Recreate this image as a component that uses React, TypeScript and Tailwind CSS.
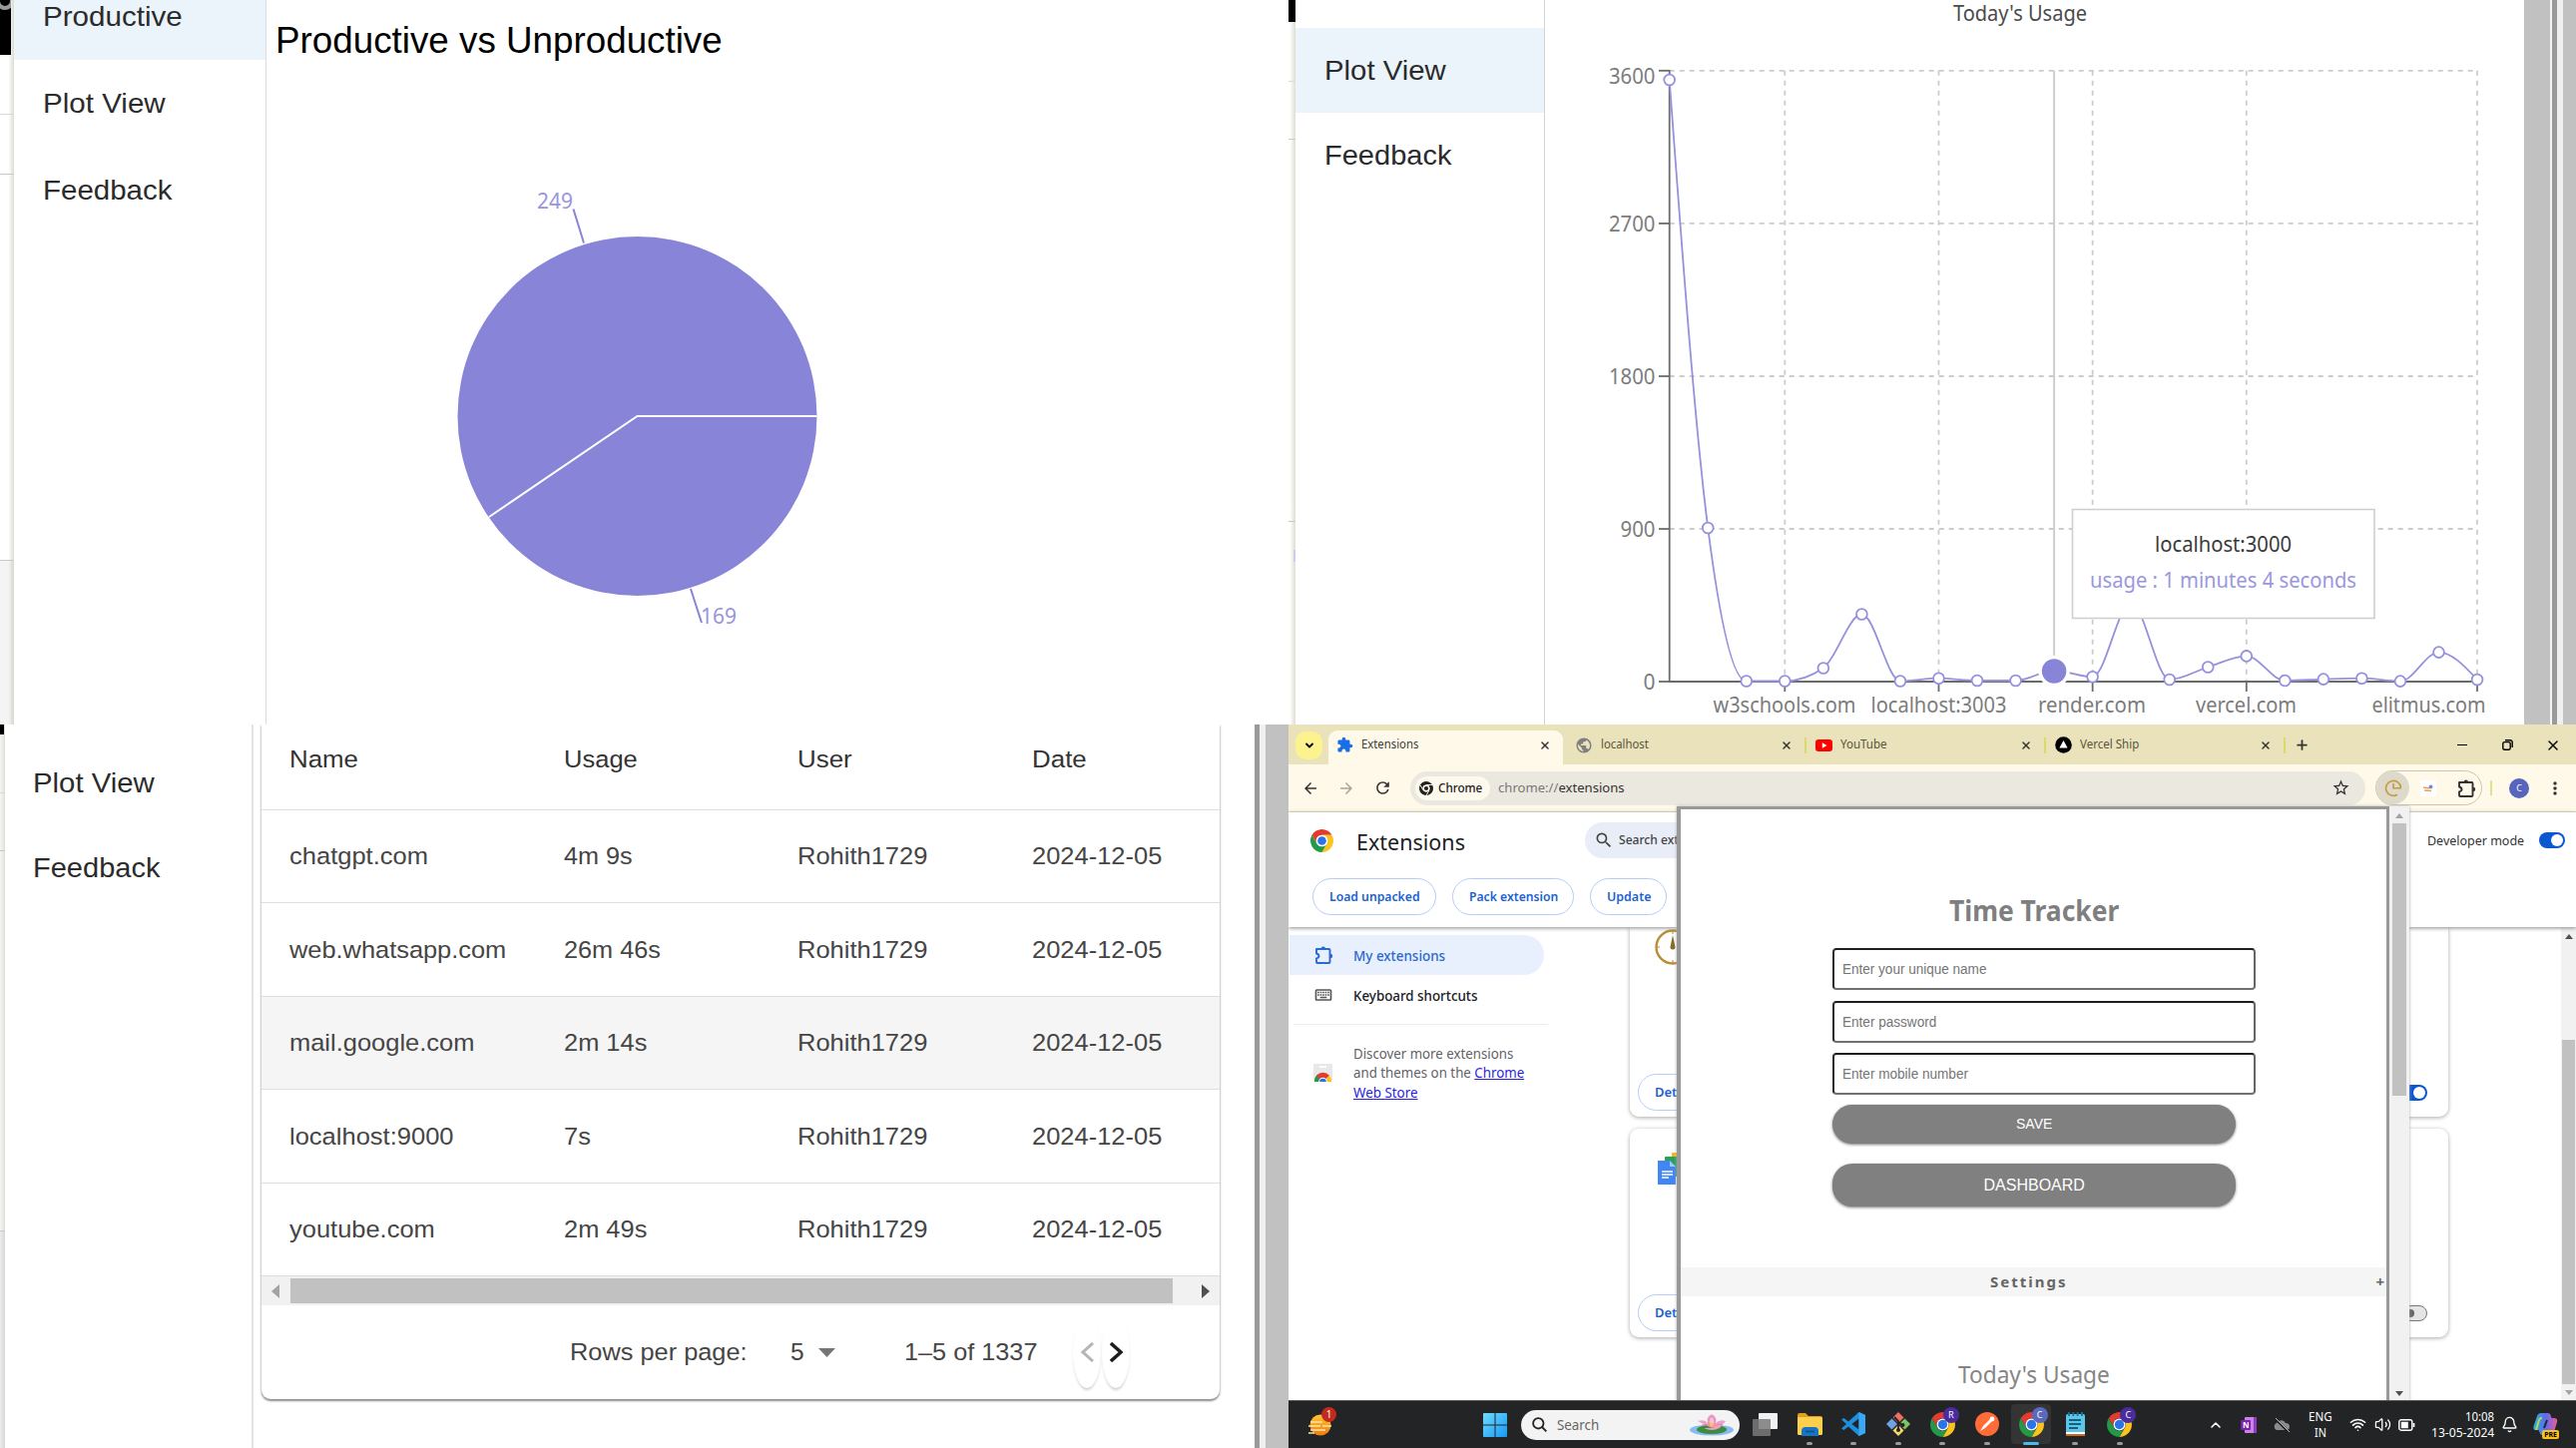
import { useLayoutEffect, useRef, useState } from "react";
import type { ReactNode } from "react";
import {
  MdExtension,
  MdOutlineExtension,
  MdPublic,
  MdOutlineKeyboard,
  MdRefresh,
  MdArrowBack,
  MdArrowForward,
  MdStarOutline,
  MdMoreVert,
  MdSearch,
} from "react-icons/md";
import { ChevronDown, ChevronUp, Plus, X, Wifi, Volume2, Bell } from "lucide-react";

const SANS = "font-['Liberation_Sans',Arial,sans-serif]";
const UI = "font-['Noto_Sans','Open_Sans',sans-serif]";

/* A one-line label squeezed or stretched to fill a slot of the given width. */
function Fit({ w, className = "", children }: { w: number; className?: string; children: ReactNode }) {
  const ref = useRef<HTMLSpanElement>(null);
  const [k, setK] = useState(1);
  useLayoutEffect(() => {
    if (ref.current) setK(w / ref.current.offsetWidth);
  }, [w]);
  return (
    <span className={`inline-block shrink-0 whitespace-nowrap text-left ${className}`} style={{ width: w }}>
      <span ref={ref} className="inline-block origin-left" style={{ transform: `scaleX(${k})` }}>
        {children}
      </span>
    </span>
  );
}

type ST = { x: number; y: number; w: number; fill?: string; size?: number; children: string };
function ChartText({ x, y, w, fill = "#7c7c7c", size = 22, children }: ST) {
  return (
    <text x={x} y={y} textLength={w} lengthAdjust="spacingAndGlyphs" fill={fill} fontSize={size}>
      {children}
    </text>
  );
}

/* ---------- productive vs unproductive ---------- */

function PiePanel() {
  return (
    <section className="flex h-[726px] w-[1291px] overflow-hidden bg-white">
      <div className="flex w-[14px] shrink-0 flex-col bg-gradient-to-r from-white from-60% to-[#dcdcd0]">
        <div className="h-[55px] w-[11px] overflow-hidden bg-black">
          <div className="-mt-2 -ml-1 size-[18px] rounded-full border-4 border-[#9a9a9a]" />
        </div>
        <div className="h-[60px] border-b border-[#d8d8d8]" />
        <div className="h-[60px] border-b border-[#c9c9c9]" />
        <div className="h-[387px] border-b border-[#c9c9c9]" />
        <div className="flex-1 bg-gradient-to-r from-[#f4f4f4] from-60% to-[#d6d6cc]" />
      </div>
      <nav className={`flex w-[253px] shrink-0 flex-col border-r border-[#dcdcde] text-[28px] text-[#2b2b2b] ${SANS}`}>
        <div className="-mt-[27px] flex h-[87px] shrink-0 items-center bg-[#ebf3fb] pl-[28.5px]">
          <Fit w={139.5}>Productive</Fit>
        </div>
        <div className="flex h-[87px] items-center pl-[28.5px]">
          <Fit w={122.5}>Plot View</Fit>
        </div>
        <div className="flex h-[87px] items-center pl-[28.5px]">
          <Fit w={129.5}>Feedback</Fit>
        </div>
      </nav>
      <div className="flex flex-1 flex-col">
        <h1 className={`mt-[16px] h-[50px] pl-[9px] text-[36px] leading-[50px] text-black ${SANS}`}>
          <Fit w={447.5}>Productive vs Unproductive</Fit>
        </h1>
        <svg className={`h-[660px] w-[1024px] ${UI}`} viewBox="267 66 1024 660">
          <circle cx="638.5" cy="417" r="180" fill="#8884d8" />
          <path d="M818.5 417H638.5L490 518" fill="none" stroke="#fff" strokeWidth="2" />
          <path d="M585 243.5L574.5 209.5M692 590L703 624" stroke="#8884d8" strokeWidth="2" />
          <ChartText x={538} y={209} w={36} fill="#9995de">249</ChartText>
          <ChartText x={702} y={624.5} w={36} fill="#9995de">169</ChartText>
        </svg>
      </div>
    </section>
  );
}

/* ---------- plot view ---------- */

const X0 = 1672.7;
const STEP = 38.54;
const YS = [80, 529, 682.5, 682.5, 669.5, 615.5, 682.5, 679.7, 682, 682, 672, 678.3, 604, 681, 668.5, 657.4, 682, 680.6, 679.7, 682.6, 653.6, 681];
const XS = YS.map((_, i) => X0 + i * STEP);
const TICKS_Y = [70.8, 223.9, 377, 530, 683];
const TICKS_X = [3, 7, 11, 15, 21];

function monotonePath() {
  const n = YS.length;
  const s = YS.slice(1).map((y, i) => (y - YS[i]) / STEP);
  const t: number[] = new Array(n).fill(0);
  for (let i = 1; i < n - 1; i++) {
    const p = (s[i - 1] + s[i]) / 2;
    t[i] = (Math.sign(s[i - 1]) + Math.sign(s[i])) * Math.min(Math.abs(s[i - 1]), Math.abs(s[i]), 0.5 * Math.abs(p)) || 0;
  }
  t[0] = (3 * s[0] - t[1]) / 2;
  t[n - 1] = (3 * s[n - 2] - t[n - 2]) / 2;
  let d = `M${XS[0]},${YS[0]}`;
  const h = STEP / 3;
  for (let i = 1; i < n; i++) {
    d += `C${XS[i - 1] + h},${YS[i - 1] + t[i - 1] * h} ${XS[i] - h},${YS[i] - t[i] * h} ${XS[i]},${YS[i]}`;
  }
  return d;
}

function PlotPanel() {
  return (
    <section className="flex h-[726px] w-[1290px] overflow-hidden bg-white">
      <div className="flex w-[7px] shrink-0 flex-col bg-gradient-to-r from-white from-20% to-[#deded2]">
        <div className="h-[22px] bg-black" />
        <div className="h-[60px] border-b border-[#d8d8d8]" />
        <div className="h-[58px] border-b border-[#c9c9c9]" />
        <div className="h-[383px] border-b border-[#c9c9c9]" />
        <div className="mt-[28px] ml-[5px] h-[12px] w-[2px] bg-[#cfccf3]" />
      </div>
      <nav className={`flex w-[250px] shrink-0 flex-col border-r border-[#d4d4d6] pt-[28px] text-[28px] text-[#2b2b2b] ${SANS}`}>
        <div className="flex h-[85px] items-center bg-[#ebf4fa] pl-[28.5px]">
          <Fit w={121.5}>Plot View</Fit>
        </div>
        <div className="flex h-[85px] items-center pl-[28.5px]">
          <Fit w={127.5}>Feedback</Fit>
        </div>
      </nav>
      <svg className={`h-[726px] w-[981px] shrink-0 ${UI}`} viewBox="1548 0 981 726">
        <ChartText x={1957} y={20.5} w={134} fill="#4a4a4a" size={21}>Today's Usage</ChartText>
        <g stroke="#cccccc" strokeWidth="1.8" strokeDasharray="5 5">
          {TICKS_Y.slice(0, 4).map((y) => (
            <line key={y} x1={X0} x2={2482} y1={y} y2={y} />
          ))}
          {TICKS_X.map((i) => (
            <line key={i} x1={XS[i]} x2={XS[i]} y1={70.8} y2={683} />
          ))}
        </g>
        <g stroke="#6b6b6b" strokeWidth="1.8">
          <line x1={X0} x2={X0} y1={70} y2={684} />
          <line x1={X0} x2={2482} y1={683} y2={683} />
          {TICKS_Y.map((y) => (
            <line key={y} x1={1662} x2={X0} y1={y} y2={y} />
          ))}
          {TICKS_X.map((i) => (
            <line key={i} x1={XS[i]} x2={XS[i]} y1={683} y2={693} />
          ))}
        </g>
        <ChartText x={1612} y={83.5} w={46.5}>3600</ChartText>
        <ChartText x={1612} y={232} w={46.5}>2700</ChartText>
        <ChartText x={1612} y={385} w={46.5}>1800</ChartText>
        <ChartText x={1623.5} y={538} w={35}>900</ChartText>
        <ChartText x={1646.5} y={690.5} w={12}>0</ChartText>
        <ChartText x={1716.5} y={713.5} w={143}>w3schools.com</ChartText>
        <ChartText x={1874.5} y={713.5} w={136}>localhost:3003</ChartText>
        <ChartText x={2042} y={713.5} w={108}>render.com</ChartText>
        <ChartText x={2200} y={713.5} w={101}>vercel.com</ChartText>
        <ChartText x={2376.5} y={713.5} w={114}>elitmus.com</ChartText>
        <line x1={XS[10]} x2={XS[10]} y1={70.8} y2={683} stroke="#cccccc" strokeWidth="2" />
        <path d={monotonePath()} fill="none" stroke="#9591dc" strokeWidth="1.8" />
        {YS.map((y, i) => (
          <circle key={i} cx={XS[i]} cy={y} r="5.4" fill="#fff" stroke="#9591dc" strokeWidth="1.8" />
        ))}
        <circle cx={XS[10]} cy="672.5" r="14" fill="#8884d8" stroke="#fff" strokeWidth="3.5" />
        <rect x="2076.5" y="510.5" width="302.5" height="109" fill="#fff" stroke="#cfcfcf" strokeWidth="1.6" />
        <ChartText x={2159} y={552.5} w={137} fill="#3a3a3a">localhost:3000</ChartText>
        <ChartText x={2094} y={588.5} w={267} fill="#9b97df">usage : 1 minutes 4 seconds</ChartText>
      </svg>
      <div className="flex flex-1">
        <div className="w-[26px] bg-[#c1c1c1]" />
        <div className="w-[2px] bg-[#f4f4f4]" />
        <div className="w-[5px] bg-[#9a9a9a]" />
        <div className="w-[6px] bg-[#f0f0f0]" />
        <div className="flex-1 bg-[#c1c1c1]" />
      </div>
    </section>
  );
}

/* ---------- usage table ---------- */

const ROWS: [string, number, string, number][] = [
  ["chatgpt.com", 138.5, "4m 9s", 69],
  ["web.whatsapp.com", 217.5, "26m 46s", 97],
  ["mail.google.com", 185, "2m 14s", 83],
  ["localhost:9000", 164.5, "7s", 27],
  ["youtube.com", 145.5, "2m 49s", 83],
];
const COLS = "grid grid-cols-[274.5px_234.5px_234.5px_1fr] items-center pl-[28px]";

function TablePanel() {
  return (
    <section className="flex h-[725px] w-[1291px] overflow-hidden bg-white">
      <div className="flex w-[5px] shrink-0 flex-col bg-gradient-to-r from-[#f6f6f4] to-[#dfdfda]">
        <div className="h-[10px] w-[4px] bg-black" />
        <div className="h-[59px] border-b border-[#d8d8d8]" />
        <div className="h-[58px] border-b border-[#c9c9c9]" />
        <div className="h-[381px] border-b border-[#c9c9c9]" />
        <div className="flex-1 bg-gradient-to-r from-[#ececec] to-[#d8d8d8]" />
      </div>
      <nav className={`flex w-[249px] shrink-0 flex-col border-r-2 border-[#e3e3e3] pt-[16px] text-[28px] text-[#2b2b2b] ${SANS}`}>
        <div className="flex h-[85px] items-center pl-[27.5px]">
          <Fit w={121.5}>Plot View</Fit>
        </div>
        <div className="flex h-[85px] items-center pl-[27.5px]">
          <Fit w={127.5}>Feedback</Fit>
        </div>
      </nav>
      <div
        className={`ml-[8px] flex h-[676px] w-[959.5px] flex-col overflow-hidden rounded-b-[9px] bg-white text-[24.5px] text-[#454545] shadow-[0_2px_2px_#8f8f8f,0_0_3px_#c8c8c8] ${SANS}`}
      >
        <div className={`h-[85.5px] shrink-0 border-b border-[#dedede] pb-[14px] text-[#333] ${COLS}`}>
          <Fit w={68.5}>Name</Fit>
          <Fit w={74}>Usage</Fit>
          <Fit w={55}>User</Fit>
          <Fit w={55}>Date</Fit>
        </div>
        {ROWS.map(([name, nw, usage, uw], i) => (
          <div key={name} className={`h-[93.6px] shrink-0 border-b border-[#dedede] pt-px ${COLS} ${i === 2 ? "bg-[#f5f5f5]" : ""}`}>
            <Fit w={nw}>{name}</Fit>
            <Fit w={uw}>{usage}</Fit>
            <Fit w={130}>Rohith1729</Fit>
            <Fit w={130}>2024-12-05</Fit>
          </div>
        ))}
        <div className="flex h-[29px] shrink-0 items-center bg-[#f1f1f1] pr-[10px] pl-[10px]">
          <svg className="h-[14px] w-[8px]" viewBox="0 0 8 14">
            <path d="M8 0V14L0 7z" fill="#a3a3a3" />
          </svg>
          <div className="ml-[11px] h-[25px] w-[884px] bg-[#c1c1c1]" />
          <svg className="ml-auto h-[14px] w-[8px]" viewBox="0 0 8 14">
            <path d="M0 0V14L8 7z" fill="#505050" />
          </svg>
        </div>
        <div className="flex flex-1 items-center">
          <Fit w={178} className="ml-[309px]">Rows per page:</Fit>
          <Fit w={14} className="ml-[43px]">5</Fit>
          <svg className="ml-[14px] h-[9px] w-[17px]" viewBox="0 0 17 9">
            <path d="M0 0H17L8.5 9z" fill="#757575" />
          </svg>
          <Fit w={133} className="ml-[69px]">1–5 of 1337</Fit>
          <div className="ml-[36px] flex gap-px">
            <div className="flex h-[72px] w-[28px] items-center justify-center rounded-[50%] shadow-[0_3px_3px_-1px_#ccc]">
              <svg className="h-[20px] w-[13px]" viewBox="0 0 13 20">
                <path d="M12 1L2 10L12 19" fill="none" stroke="#b5b5b5" strokeWidth="3" />
              </svg>
            </div>
            <div className="flex h-[72px] w-[28px] items-center justify-center rounded-[50%] shadow-[0_3px_3px_-1px_#ccc]">
              <svg className="h-[20px] w-[13px]" viewBox="0 0 13 20">
                <path d="M1 1L11 10L1 19" fill="none" stroke="#1c1c1c" strokeWidth="3.4" />
              </svg>
            </div>
          </div>
        </div>
      </div>
      <div className="ml-auto flex w-[34.5px]">
        <div className="w-[5.5px] bg-[#9a9a9a]" />
        <div className="w-[5.5px] bg-[#f0f0f0]" />
        <div className="flex-1 bg-[#c1c1c1]" />
      </div>
    </section>
  );
}

/* ---------- browser ---------- */

function ChromeLogo({ className, mono = false }: { className: string; mono?: boolean }) {
  const [r, g, y, b] = mono ? ["#222", "#222", "#222", "#222"] : ["#e33b2e", "#249a48", "#fcc31e", "#2a74e8"];
  return (
    <svg className={className} viewBox="-12 -12 24 24">
      <path d="M-10.39-6A12 12 0 0 1 10.39-6H0A6 6 0 0 0-5.2 3z" fill={r} />
      <path d="M10.39-6A12 12 0 0 1 0 12L5.2 3A6 6 0 0 0 0-6z" fill={y} />
      <path d="M0 12A12 12 0 0 1-10.39-6L-5.2 3A6 6 0 0 0 5.2 3z" fill={g} />
      {mono && <path d="M0-6H10.4M-5.2 3L-10.4-6M5.2 3L0 12" stroke="#fdf8e8" strokeWidth="1.6" />}
      <circle r="5.8" fill={mono ? "#fdf8e8" : "#fff"} />
      <circle r={mono ? 3.6 : 4.5} fill={b} />
    </svg>
  );
}

/* Puzzle piece with rounded knobs on the top and right edges. */
function PuzzleOutline({ className }: { className: string }) {
  return (
    <svg className={className} viewBox="0 0 20 20" fill="none" stroke="currentColor" strokeWidth="1.9" strokeLinejoin="round">
      <path d="M3 4H15.500Q16.500 4 16.500 5V17Q16.500 18 15.500 18H4Q3 18 3 17V13.500Q5.500 12.800 5.500 11T3 8.500z" />
      <path d="M7.600 3.600A2.200 2.200 0 0 1 12 3.600zM17 8.700A2.200 2.200 0 0 1 17 13.100z" fill="currentColor" stroke="none" />
    </svg>
  );
}

function Tab({ icon, label, lw, className }: { icon: ReactNode; label: string; lw: number; className: string }) {
  return (
    <div className={`flex shrink-0 items-center text-[12.5px] ${className}`}>
      {icon}
      <Fit w={lw} className="ml-[8px]">{label}</Fit>
      <X className="mr-[12px] ml-auto size-[12px] text-[#333]" strokeWidth={3} />
    </div>
  );
}

const TabSep = () => <div className="h-[16px] w-[2px] shrink-0 bg-[#d8da6c]" />;

function TabStrip() {
  return (
    <div className="flex h-[40px] shrink-0 items-center bg-[#e9e2bb] pt-px pl-[7px] text-[#5a553c]">
      <div className="flex h-[28px] w-[27px] items-center justify-center rounded-[10px] bg-[#fdf290] text-black">
        <ChevronDown className="size-[12px]" strokeWidth={3.6} />
      </div>
      <Tab
        className="mt-[5px] ml-[6px] h-[34px] w-[235px] rounded-t-[9px] bg-[#fef9e9] pb-[5px] pl-[8px] text-[#3c3c3c]"
        icon={<MdExtension className="size-[17px] text-[#1a6fe8]" />}
        label="Extensions"
        lw={57}
      />
      <Tab className="w-[241.5px] pl-[12px]" icon={<MdPublic className="size-[18px] text-[#808080]" />} label="localhost" lw={48} />
      <TabSep />
      <Tab
        className="w-[238px] pl-[9px]"
        icon={
          <svg className="h-[12px] w-[17px]" viewBox="0 0 17 12">
            <rect width="17" height="12" rx="3" fill="#f00" />
            <path d="M6.8 3.2V8.8L11.5 6z" fill="#fff" />
          </svg>
        }
        label="YouTube"
        lw={47}
      />
      <TabSep />
      <Tab
        className="w-[238px] pl-[9px]"
        icon={
          <svg className="size-[17px]" viewBox="0 0 17 17">
            <circle cx="8.5" cy="8.5" r="8.3" fill="#000" />
            <path d="M8.5 4L12.6 11.5H4.4z" fill="#fff" />
          </svg>
        }
        label="Vercel Ship"
        lw={59}
      />
      <TabSep />
      <Plus className="ml-[9px] size-[15px] text-[#333]" strokeWidth={2.8} />
      <div className="ml-auto flex text-black">
        <div className="flex w-[45.7px] items-center justify-center">
          <div className="h-[1.5px] w-[10px] bg-black" />
        </div>
        <div className="flex w-[45.7px] items-center justify-center">
          <svg className="size-[11px]" viewBox="0 0 11 11" fill="none" stroke="#000" strokeWidth="1.4">
            <rect x="0.8" y="2.6" width="7.4" height="7.6" rx="1.6" />
            <path d="M3 .8H8.2A2 2 0 0 1 10.2 2.8V8" />
          </svg>
        </div>
        <div className="flex w-[45.7px] items-center justify-center">
          <X className="size-[16px]" strokeWidth={2.1} />
        </div>
      </div>
    </div>
  );
}

function Toolbar() {
  return (
    <div className="flex h-[48px] shrink-0 items-center border-b border-[#e3dec3] bg-[#fef9e9] text-[13px] text-[#333]">
      <MdArrowBack className="ml-[13px] size-[18px]" />
      <MdArrowForward className="ml-[18px] size-[18px] text-[#a8a69c]" />
      <MdRefresh className="ml-[18px] size-[19px]" />
      <div className="ml-[18px] flex h-[34px] w-[957px] items-center rounded-full bg-[#ebe8e0] pr-[15px] pl-[5px]">
        <div className="flex h-[24px] w-[75px] items-center rounded-full bg-[#fdf9ec] pl-[4px]">
          <ChromeLogo mono className="size-[14px]" />
          <Fit w={44} className="ml-[5px] font-medium text-[#222]">Chrome</Fit>
        </div>
        <Fit w={127} className="ml-[8px]">
          <span className="text-[#777]">chrome://</span>extensions
        </Fit>
        <MdStarOutline className="ml-auto size-[19px]" />
      </div>
      <div className="ml-[10px] flex h-[35px] w-[107px] items-center rounded-full border border-[#cbc6b4]">
        <div className="flex h-full w-[33px] items-center justify-center rounded-full bg-[#dedacb]">
          <svg className="size-[18px]" viewBox="0 0 18 18" fill="none" stroke="#c59a3f" strokeWidth="1.6">
            <path d="M16.5 8A7.5 7.5 0 1 0 13 15.3" />
            <path d="M9 4V8.8H17" />
          </svg>
        </div>
        <div className="ml-[11px] flex size-[16px] items-center justify-center bg-white">
          <svg className="size-[10px]" viewBox="0 0 10 10">
            <path d="M0 4L6 5M1 7L8 7.5" stroke="#ef9d5c" strokeWidth="1.6" />
            <circle cx="7.5" cy="3.5" r="2" fill="#7a8fc9" />
          </svg>
        </div>
        <PuzzleOutline className="mr-[5px] ml-auto size-[20px]" />
      </div>
      <div className="ml-[8px] h-[15px] w-[2px] bg-[#e4e08a]" />
      <div className="ml-[17px] flex size-[20px] items-center justify-center rounded-full bg-[#5865bd] text-[9px] text-white">C</div>
      <MdMoreVert className="ml-[16px] size-[20px]" />
    </div>
  );
}

function Toggle({ on }: { on: boolean }) {
  return on ? (
    <div className="flex h-[16px] w-[26px] items-center justify-end rounded-full bg-[#0b57d0] pr-[2px]">
      <div className="size-[12px] rounded-full bg-white" />
    </div>
  ) : (
    <div className="flex h-[16px] w-[26px] items-center rounded-full border border-[#777] bg-[#e4e4e4] pl-[4px]">
      <div className="size-[8px] rounded-full bg-[#666]" />
    </div>
  );
}

const PILL = "flex h-[37px] items-center justify-center rounded-full border border-[#b4cdf8] text-[13px] font-semibold text-[#1b62d0]";

function ExtensionCard({ icon, on, className }: { icon: ReactNode; on: boolean; className: string }) {
  return (
    <div className={`flex w-[820px] shrink-0 flex-col bg-white shadow-[0_1px_4px_#a8a8a8] ${className}`}>
      <div className="ml-[25px] flex-1">{icon}</div>
      <div className="mb-[6px] ml-[8px] flex items-center">
        <div className={`${PILL} w-[78px]`}>
          <Fit w={44}>Details</Fit>
        </div>
        <div className="mr-[21px] ml-auto">
          <Toggle on={on} />
        </div>
      </div>
    </div>
  );
}

function ClockIcon() {
  return (
    <svg className="mt-[2px] size-[36px]" viewBox="0 0 36 36" fill="none" stroke="#b98d33">
      <circle cx="18" cy="18" r="16.5" strokeWidth="2.4" fill="#fff" />
      <path d="M18 2V5M2 18H5M18 31V34" strokeWidth="1" />
      <path d="M18 6L20.5 18A2.5 2.5 0 1 1 15.5 18z" fill="#8a6a28" stroke="none" />
    </svg>
  );
}

function DocsIcon() {
  return (
    <svg className="mt-[23px] ml-[3px] h-[34px] w-[36px]" viewBox="0 0 36 34">
      <rect x="14" y="1" width="16" height="18" rx="1" fill="#f5b912" />
      <rect x="7" y="5" width="18" height="20" rx="1" fill="#27a15a" />
      <path d="M0 9H12L18 15V33H0z" fill="#4285f4" />
      <path d="M12 9L18 15H12z" fill="#a6c5fa" />
      <path d="M4 20H15M4 23H15M4 26H11" stroke="#fff" strokeWidth="1.4" />
    </svg>
  );
}

function ExtensionsPage() {
  return (
    <div className="flex min-h-0 flex-1 flex-col bg-white text-[#202124]">
      <header className="z-10 flex h-[115px] shrink-0 flex-col bg-white shadow-[0_1px_4px_#888]">
        <div className="mt-[8px] flex h-[40px] items-center">
          <ChromeLogo className="ml-[22px] size-[23px]" />
          <Fit w={109} className="mt-[4px] ml-[23px] text-[21.5px] leading-[30px]">Extensions</Fit>
          <div className="ml-[120px] flex h-[36px] w-[400px] items-center rounded-full bg-[#e9edf8] pl-[9px] text-[13px] text-[#444]">
            <MdSearch className="size-[20px]" />
            <Fit w={104} className="ml-[5px] font-medium">Search extensions</Fit>
          </div>
          <Fit w={97} className="mt-[2px] ml-auto text-[13px] text-[#333]">Developer mode</Fit>
          <div className="mr-[11px] ml-[15px]">
            <Toggle on />
          </div>
        </div>
        <div className="mt-[18px] ml-[24px] flex gap-[16px]">
          <div className={`${PILL} w-[124px] pt-px`}><Fit w={91}>Load unpacked</Fit></div>
          <div className={`${PILL} w-[122px] pt-px`}><Fit w={89}>Pack extension</Fit></div>
          <div className={`${PILL} w-[77px] pt-px`}><Fit w={44}>Update</Fit></div>
        </div>
      </header>
      <div className="flex min-h-0 flex-1">
        <aside className="w-[342px] shrink-0 pt-[8px] text-[14px]">
          <div className="ml-px flex h-[40px] w-[255px] items-center rounded-r-full bg-[#e8effd] font-medium text-[#2a69cf]">
            <PuzzleOutline className="ml-[24px] size-[20px]" />
            <Fit w={92} className="ml-[20px]">My extensions</Fit>
          </div>
          <div className="ml-px flex h-[40px] items-center font-medium">
            <MdOutlineKeyboard className="ml-[24px] size-[20px] text-[#555]" />
            <Fit w={124} className="ml-[20px]">Keyboard shortcuts</Fit>
          </div>
          <div className="mt-[9px] ml-[5px] h-px w-[255px] bg-[#ececec]" />
          <div className="mt-[19px] flex items-center text-[#5f6368]">
            <svg className="ml-[25px] h-[18px] w-[19px]" viewBox="0 0 19 18">
              <rect width="19" height="16" rx="1" fill="#e8e8e8" />
              <path d="M6 3H13" stroke="#fff" strokeWidth="2" />
              <path d="M1 18A8.500 8.500 0 0 1 3.500 11.200L9.500 18z" fill="#249a48" />
              <path d="M3 11.800A8.500 8.500 0 0 1 16 11.800L9.500 18z" fill="#e33b2e" />
              <path d="M16 11.800A8.500 8.500 0 0 1 18 18H9.500z" fill="#fcc31e" />
              <path d="M5.200 18A4.300 4.300 0 0 1 13.800 18z" fill="#fff" />
              <path d="M6.200 18A3.300 3.300 0 0 1 12.800 18z" fill="#2a74e8" />
            </svg>
            <p className="ml-[20.500px] flex flex-col leading-[19.4px]">
              <Fit w={160}>Discover more extensions</Fit>
              <Fit w={171}>
                and themes on the <span className="text-[#2a1fe0] underline">Chrome</span>
              </Fit>
              <Fit w={65} className="text-[#2a1fe0]">
                <span className="underline">Web Store</span>
              </Fit>
            </p>
          </div>
        </aside>
        <div className="flex w-[820px] shrink-0 flex-col gap-[12px]">
          <ExtensionCard className="h-[190px] rounded-b-[9px]" icon={<ClockIcon />} on />
          <ExtensionCard className="h-[209px] rounded-[9px]" icon={<DocsIcon />} on={false} />
        </div>
        <div className="ml-auto flex w-[15px] flex-col items-center bg-[#f1f1f1]">
          <svg className="mt-[7px] h-[5px] w-[8px]" viewBox="0 0 8 5"><path d="M0 5H8L4 0z" fill="#505050" /></svg>
          <div className="mt-[101px] h-[345px] w-[13px] bg-[#c1c1c1]" />
          <svg className="mt-[6px] h-[5px] w-[8px]" viewBox="0 0 8 5"><path d="M0 0H8L4 5z" fill="#a3a3a3" /></svg>
        </div>
      </div>
    </div>
  );
}

function Popup() {
  const fields: [string, number][] = [
    ["Enter your unique name", 144],
    ["Enter password", 94],
    ["Enter mobile number", 126],
  ];
  return (
    <div className="absolute top-[82px] left-[389px] z-20 flex h-[596px] w-[734px] bg-white shadow-[0_0_3px_#aaa]">
      <div className="flex w-[714px] flex-col overflow-hidden border-t-[3px] border-r-[3px] border-l-[4px] border-[#999] pt-[80.5px]">
        <div className="flex h-[40px] shrink-0 justify-center text-[28px] leading-[40px] font-bold text-[#7f7f7f]">
          <Fit w={170}>Time Tracker</Fit>
        </div>
        <div className={`mt-[18.5px] ml-[152px] flex flex-col gap-[10.5px] text-[14px] text-[#757575] ${SANS}`}>
          {fields.map(([label, w]) => (
            <div
              key={label}
              className="flex h-[42px] w-[424px] items-center rounded-[4px] border-2 border-t-[#1e1e1e] border-r-[#666] border-b-[#707070] border-l-[#2a2a2a] pt-px pl-[8px]"
            >
              <Fit w={w}>{label}</Fit>
            </div>
          ))}
        </div>
        <div className={`ml-[152px] flex w-[404px] flex-col text-white ${SANS}`}>
          <div className="mt-[10px] flex h-[39px] items-center justify-center rounded-[20px] bg-[#808080] text-[14px] shadow-[0_1px_3px_#777]">
            <Fit w={36}>SAVE</Fit>
          </div>
          <div className="mt-[20px] flex h-[43px] items-center justify-center rounded-[20px] bg-[#808080] text-[16px] shadow-[0_1px_3px_#777]">
            <Fit w={101}>DASHBOARD</Fit>
          </div>
        </div>
        <div className="mt-[61px] flex h-[28.5px] shrink-0 items-center bg-[#f5f5f5] text-[15px] font-bold text-[#666]">
          <Fit w={78} className="ml-[310px] tracking-[2px]">Settings</Fit>
          <span className="mr-[2px] ml-auto">+</span>
        </div>
        <div className="mt-[58px] flex h-[40px] shrink-0 justify-center text-[24px] leading-[40px] text-[#858585]">
          <Fit w={152}>Today's Usage</Fit>
        </div>
      </div>
      <div className="flex flex-1 flex-col items-center bg-[#f1f1f1]">
        <svg className="mt-[7px] h-[5px] w-[8px]" viewBox="0 0 8 5"><path d="M0 5H8L4 0z" fill="#a3a3a3" /></svg>
        <div className="mt-[5px] h-[273px] w-[14px] bg-[#c1c1c1]" />
        <svg className="mt-auto mb-[5px] h-[5px] w-[8px]" viewBox="0 0 8 5"><path d="M0 0H8L4 5z" fill="#505050" /></svg>
      </div>
    </div>
  );
}

function TaskSlot({ children, dot = true, active = false }: { children: ReactNode; dot?: boolean; active?: boolean }) {
  return (
    <div className="flex h-[47px] w-[44.4px] shrink-0 flex-col items-center px-[2px]">
      <div className={`mt-[3px] -mb-[2px] flex h-[40px] w-full items-center justify-center ${active ? "rounded-[4px] bg-[#343434]" : ""}`}>{children}</div>
      {active ? (
        <div className="z-10 h-[3px] w-[16px] rounded-full bg-[#4cb8ee]" />
      ) : dot ? (
        <div className="z-10 h-[3px] w-[6px] rounded-full bg-[#9a9a9a]" />
      ) : null}
    </div>
  );
}

function ProfileChrome({ letter, badge }: { letter: string; badge: string }) {
  return (
    <div className="relative">
      <ChromeLogo className="size-[25px]" />
      <div className={`absolute -top-[5px] -right-[4px] flex size-[16px] items-center justify-center rounded-full text-[9px] leading-none text-white ${badge}`}>
        {letter}
      </div>
    </div>
  );
}

function Taskbar() {
  return (
    <div className="z-30 flex h-[48px] shrink-0 items-center overflow-hidden border-t border-[#555] bg-[#222425] text-white">
      <div className="relative ml-[20px]">
        <svg className="h-[22px] w-[24px]" viewBox="0 0 24 22">
          <defs>
            <linearGradient id="sun" x1="0" y1="0" x2="0" y2="1">
              <stop offset="0" stopColor="#fbc62f" />
              <stop offset="1" stopColor="#ee7c14" />
            </linearGradient>
          </defs>
          <circle cx="12" cy="11" r="10.5" fill="url(#sun)" />
          <path d="M2 8H14M0 12H12M14 12H23M2 16H17M0 19H6" stroke="#ffe3a6" strokeWidth="1.4" />
        </svg>
        <div className="absolute -top-[7px] -right-[4px] flex size-[15px] items-center justify-center rounded-full bg-[#c42b1c] text-[10px]">1</div>
      </div>
      <svg className="ml-[151px] size-[24px]" viewBox="0 0 24 24">
        <defs>
          <linearGradient id="win" x1="0" y1="0" x2="1" y2="1">
            <stop offset="0" stopColor="#6fdcff" />
            <stop offset="1" stopColor="#1697f5" />
          </linearGradient>
        </defs>
        <path d="M0 1Q0 0 1 0H11.5V11.5H0zM12.5 0H23Q24 0 24 1V11.5H12.5zM0 12.5H11.5V24H1Q0 24 0 23zM12.5 12.5H24V23Q24 24 23 24H12.5z" fill="url(#win)" />
      </svg>
      <div className="ml-[14px] flex h-[30px] w-[219px] items-center rounded-full bg-[#f3f3f3] pr-[6px] pl-[11px] text-[14px] text-[#666]">
        <svg className="size-[15px]" viewBox="0 0 15 15" fill="none" stroke="#222" strokeWidth="1.8">
          <circle cx="6.3" cy="6.3" r="5.2" />
          <path d="M10 10L14.4 14.4" />
        </svg>
        <Fit w={42} className="ml-[10px]">Search</Fit>
        <svg className="ml-auto h-[22px] w-[44px]" viewBox="0 0 44 22">
          <ellipse cx="22" cy="16" rx="22" ry="5.5" fill="#85bdf2" />
          <ellipse cx="22" cy="15.5" rx="15" ry="4.5" fill="#3f8a3c" />
          <path d="M22 14L8 7Q15 5 18 9Q16 3 22 0Q28 3 26 9Q30 5 36 7L30 14Q22 18 14 14z" fill="#ee9fc6" />
          <path d="M22 14Q16 8 22 2Q28 8 22 14M12 11Q18 9 22 14Q27 9 33 11" fill="#f7c4dd" stroke="#d874a8" strokeWidth=".7" />
          <circle cx="22" cy="10.5" r="2.2" fill="#f4c64e" />
        </svg>
      </div>
      <div className="ml-[3.5px] flex">
        <TaskSlot dot={false}>
          <svg className="h-[23px] w-[25px]" viewBox="0 0 25 23">
            <rect x="6" width="19" height="16" rx="1" fill="#f2f2f2" />
            <rect y="6" width="18" height="17" rx="1" fill="#7a7a7a" fillOpacity=".85" />
          </svg>
        </TaskSlot>
        <TaskSlot>
          <svg className="h-[23px] w-[25px]" viewBox="0 0 25 23">
            <path d="M0 2Q0 0 2 0H8L11 3H23Q25 3 25 5V20H0z" fill="#e0a01c" />
            <rect y="4" width="25" height="18" rx="1.5" fill="#fcd04d" />
            <path d="M4 23V18Q4 14 8 14H17Q21 14 21 18V23z" fill="#1873c2" />
            <path d="M8 18.5H17" stroke="#0d4f8f" strokeWidth="1.6" />
          </svg>
        </TaskSlot>
        <TaskSlot>
          <svg className="size-[24px]" viewBox="0 0 24 24">
            <path d="M17.5 0L24 3V21L17.5 24L7 14.5L2.4 18L0 16.6L5 12L0 7.4L2.4 6L7 9.5zM17.5 6.5L10.4 12L17.5 17.5z" fill="#1e8fdd" fillRule="evenodd" />
            <path d="M17.5 0L24 3V21L17.5 24z" fill="#3aa9f3" />
          </svg>
        </TaskSlot>
        <TaskSlot>
          <svg className="size-[24px]" viewBox="0 0 24 24">
            <path d="M12 0L17.5 5.5L12 11L6.5 5.5z" fill="#ef6f66" />
            <path d="M18.5 6.5L24 12L18.5 17.5L13 12z" fill="#7fc464" />
            <path d="M5.5 6.5L11 12L5.5 17.5L0 12z" fill="#6fa2e6" />
            <path d="M12 13L17.5 18.5L12 24L6.5 18.5z" fill="#f6d76b" />
            <path d="M8 5L12 9V18M12 10L16 13" stroke="#222" strokeWidth="1.8" fill="none" />
            <circle cx="12" cy="18" r="2" fill="#222" />
            <circle cx="16.5" cy="13" r="2" fill="#222" />
          </svg>
        </TaskSlot>
        <TaskSlot><ProfileChrome letter="R" badge="bg-[#4a2c9c]" /></TaskSlot>
        <TaskSlot>
          <svg className="size-[24px]" viewBox="0 0 24 24">
            <circle cx="12" cy="12" r="12" fill="#ff6c37" />
            <path d="M5 19L8 14L15 7L17 9L10 16z" fill="#fff" />
            <circle cx="17" cy="7" r="2.4" fill="#fff" />
          </svg>
        </TaskSlot>
        <TaskSlot active><ProfileChrome letter="C" badge="bg-[#5b69bd]" /></TaskSlot>
        <TaskSlot>
          <svg className="h-[24px] w-[19px]" viewBox="0 0 19 24">
            <rect y="2" width="19" height="22" rx="1.5" fill="#5cc5ea" />
            <rect y="21" width="19" height="3" fill="#c96a1c" />
            <rect y="20" width="19" height="2" fill="#fff" />
            <path d="M3 8H15M3 12H15M3 16H12" stroke="#14617f" strokeWidth="1.8" />
            <path d="M3 0V4M7.300 0V4M11.600 0V4M16 0V4" stroke="#1d7396" strokeWidth="1.8" />
          </svg>
        </TaskSlot>
        <TaskSlot><ProfileChrome letter="C" badge="bg-[#4a2c9c]" /></TaskSlot>
      </div>
      <ChevronUp className="ml-[66px] size-[16px]" strokeWidth={2.4} />
      <svg className="ml-[17px] h-[16px] w-[16px]" viewBox="0 0 16 16">
        <rect x="4" width="12" height="16" rx="1" fill="#c883e8" />
        <path d="M13 0H15Q16 0 16 1V15Q16 16 15 16H13z" fill="#8e3bbd" />
        <rect y="3" width="10" height="10" rx="1" fill="#7a22ad" />
        <text x="2" y="11" fontSize="8" fontWeight="700" fill="#fff">N</text>
      </svg>
      <svg className="ml-[16px] h-[14px] w-[18px]" viewBox="0 0 18 14">
        <path d="M4 12A3.800 3.800 0 0 1 4 5A5 5 0 0 1 13 5A3.600 3.600 0 0 1 14.500 12z" fill="#8c8c8c" />
        <path d="M2 0L16 14" stroke="#222425" strokeWidth="2.4" />
        <path d="M3 0L17 14" stroke="#bbb" strokeWidth="1" />
      </svg>
      <div className="ml-[17px] flex w-[26px] flex-col items-center text-[12.5px] leading-[16px]">
        <Fit w={24}>ENG</Fit>
        <Fit w={12}>IN</Fit>
      </div>
      <Wifi className="ml-[16px] size-[17px]" strokeWidth={2.2} />
      <Volume2 className="ml-[8px] size-[17px]" strokeWidth={1.8} />
      <svg className="ml-[7px] h-[12px] w-[17px]" viewBox="0 0 17 12">
        <rect x=".8" y=".8" width="13" height="10.400" rx="2" fill="none" stroke="#fff" strokeWidth="1.400" />
        <rect x="2.800" y="2.800" width="7" height="6.400" fill="#fff" />
        <path d="M15.500 4V8" stroke="#fff" strokeWidth="1.800" />
      </svg>
      <div className="ml-auto flex flex-col items-end text-[12.5px] leading-[16px]">
        <Fit w={29}>10:08</Fit>
        <Fit w={63}>13-05-2024</Fit>
      </div>
      <Bell className="ml-[7px] size-[17px]" strokeWidth={1.9} />
      <div className="relative mr-[18px] ml-[15px]">
        <svg className="size-[25px]" viewBox="0 0 25 25">
          <defs>
            <linearGradient id="cp" x1="0" y1="0" x2="1" y2="0">
              <stop offset="0" stopColor="#2bb5d8" />
              <stop offset=".5" stopColor="#5a6cf0" />
              <stop offset="1" stopColor="#ee5c9c" />
            </linearGradient>
          </defs>
          <path d="M8 1H15Q17 1 17.600 3L18.500 6H21Q25 6 24 10L21 20Q20 23 17 23H9Q7 23 6.500 20L5.500 18H3Q-.5 18 .6 14L4 4Q5 1 8 1z" fill="url(#cp)" />
          <path d="M3 18L6 8Q6.500 6 9 6" stroke="#b6d84c" strokeWidth="2" fill="none" />
          <path d="M11 16L14 8" stroke="#222425" strokeWidth="2" />
        </svg>
        <div className="absolute -right-[1px] -bottom-[2px] rounded-[2px] bg-[#fcc21a] px-[2px] text-[7px] leading-[9px] font-bold text-black">PRE</div>
      </div>
    </div>
  );
}

function BrowserPanel() {
  return (
    <section className={`relative flex h-[725px] w-[1290px] flex-col overflow-hidden bg-white ${UI}`}>
      <TabStrip />
      <Toolbar />
      <ExtensionsPage />
      <Popup />
      <Taskbar />
    </section>
  );
}

export default function App() {
  return (
    <main className="grid h-[1451px] w-[2581px] grid-cols-[1291px_1290px] grid-rows-[726px_725px] overflow-hidden bg-white">
      <PiePanel />
      <PlotPanel />
      <TablePanel />
      <BrowserPanel />
    </main>
  );
}
